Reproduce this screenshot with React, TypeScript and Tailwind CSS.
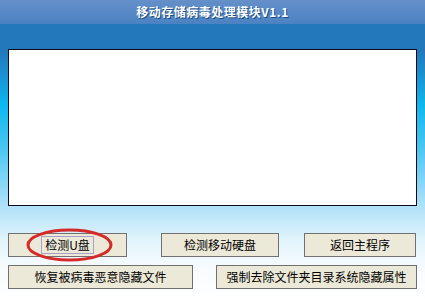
const font = { fontFamily: '"SimSun", "Noto Sans CJK SC", sans-serif' };

function XpButton({ label, className, focused }: { label: string; className: string; focused?: boolean }) {
  return (
    <button
      className={`h-6 border border-[#707070] bg-[#ece9d8] text-[12px] leading-none text-black flex items-center justify-center ${className}`}
    >
      {focused ? (
        <span className="border border-[#a8a0c8] px-[3px] py-[2px]">{label}</span>
      ) : (
        label
      )}
    </button>
  );
}

export default function App() {
  return (
    <div
      className="relative w-[425px] h-[300px] overflow-hidden bg-[linear-gradient(to_bottom,#2377bb_0px,#2278ba_50px,#1a92d2_75px,#0cb8f0_105px,#4cc7f2_150px,#a6def8_200px,#e2f4fc_240px,#f8fcff_270px,#ffffff_300px)]"
      style={font}
    >
      {/* title bar */}
      <div className="h-6 flex items-center justify-center bg-[linear-gradient(to_bottom,#6590c9,#4b82c2)]">
        <span className="text-white font-bold text-[12px] tracking-[0.5px] [text-shadow:1px_1px_0_#1a4a80]">
          移动存储病毒处理模块V1.1
        </span>
      </div>

      {/* output box */}
      <div className="mx-2 mt-[25px] h-[157px] bg-white border border-[#0a0a1a]" />

      <div className="flex mt-[27px] pl-2">
        <XpButton label="检测U盘" className="w-[119px]" focused />
        <XpButton label="检测移动硬盘" className="w-[118px] ml-[34px]" />
        <XpButton label="返回主程序" className="w-[112px] ml-[25px]" />
      </div>
      <div className="flex mt-2 pl-2">
        <XpButton label="恢复被病毒恶意隐藏文件" className="w-[185px]" />
        <XpButton label="强制去除文件夹目录系统隐藏属性" className="w-[201px] ml-[23px]" />
      </div>

      {/* red annotation circle */}
      <svg className="absolute left-0 top-0 pointer-events-none" width="425" height="300">
        <ellipse cx="69.5" cy="245" rx="41.5" ry="15" fill="none" stroke="#d42a2a" strokeWidth="3" />
      </svg>
    </div>
  );
}
